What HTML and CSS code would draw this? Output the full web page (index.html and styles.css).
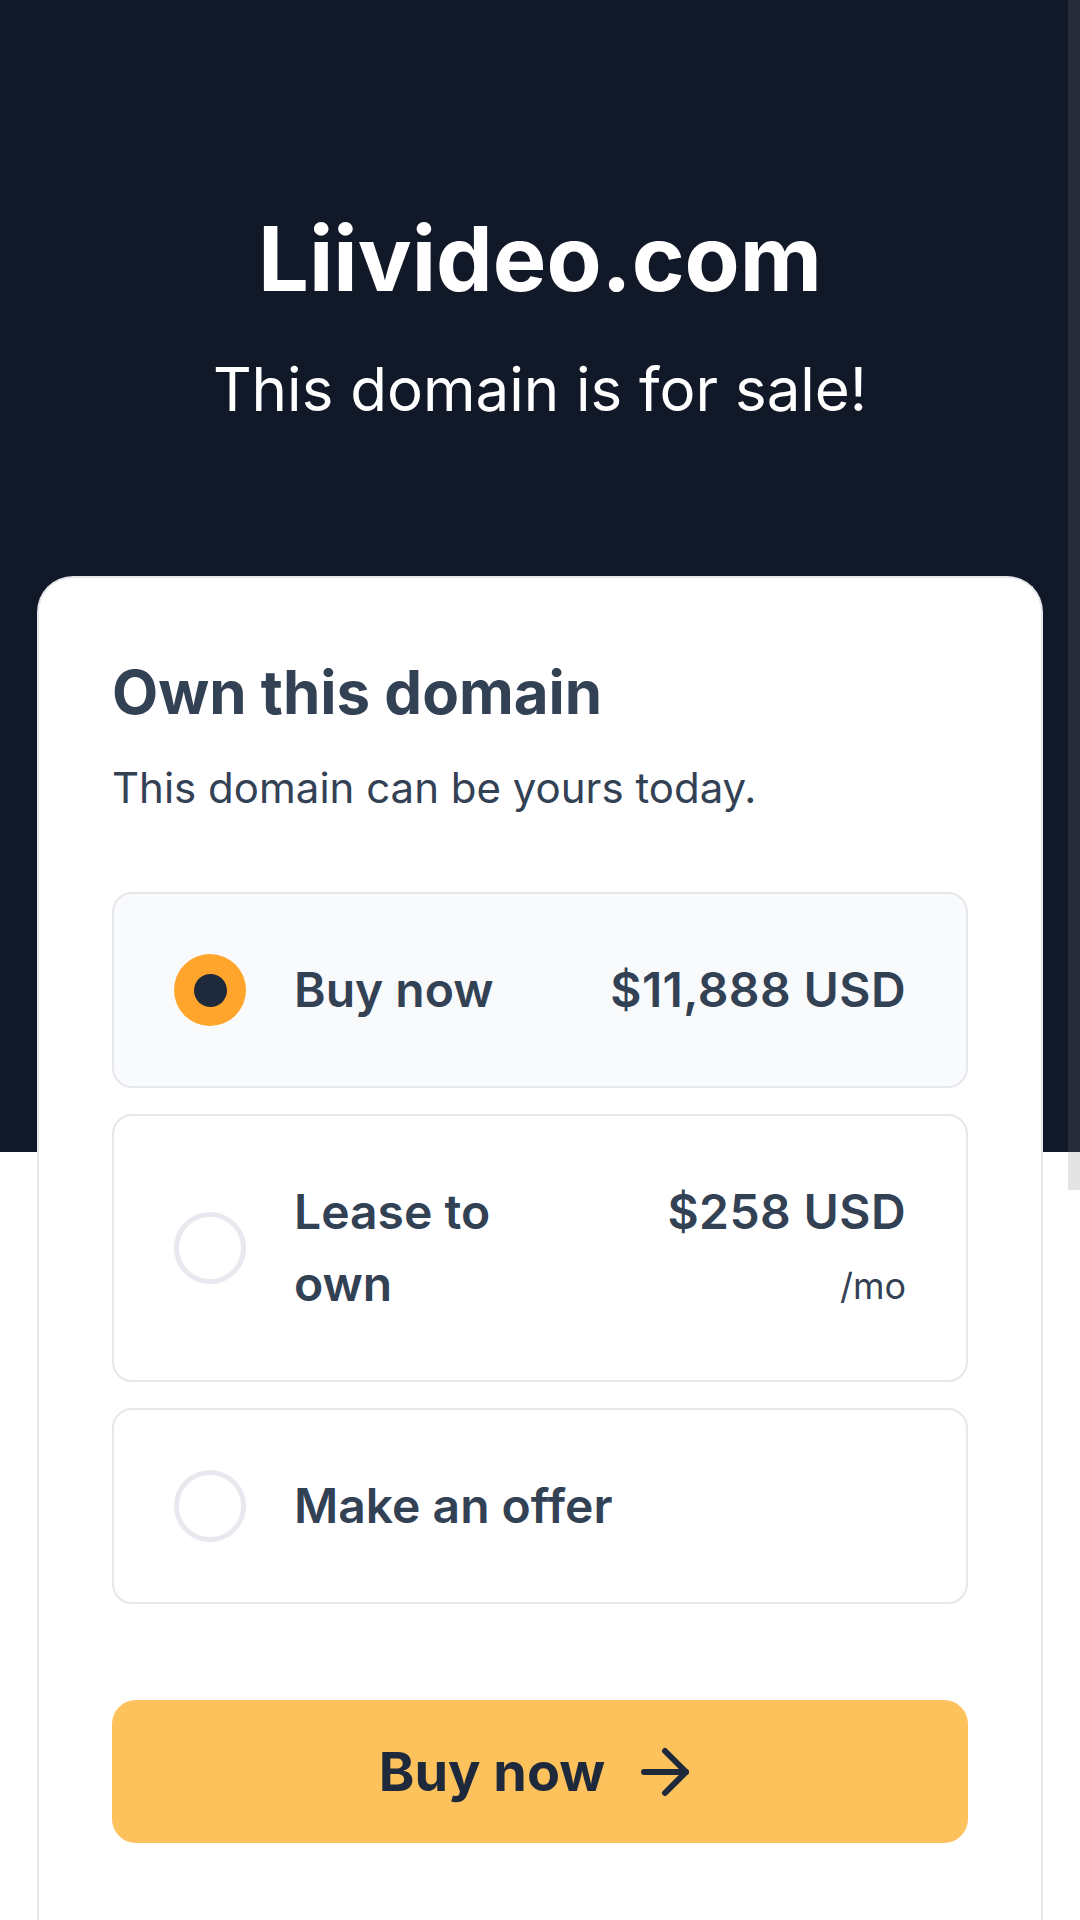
FILE: index.html
```html
<!DOCTYPE html>
<html lang="en">
<head>
<meta charset="utf-8">
<title>Liivideo.com</title>
<link rel="stylesheet" href="styles.css">
</head>
<body>
<div class="scrollbar"><div class="scrollbar-thumb"></div></div>
<header class="hero">
  <h1 class="hero-title">Liivideo.com</h1>
  <p class="hero-sub">This domain is for sale!</p>
</header>
<main class="card">
  <h2 class="card-title">Own this domain</h2>
  <p class="card-sub">This domain can be yours today.</p>
  <div class="options">
    <div class="opt opt-selected">
      <span class="radio radio-on"><span class="radio-dot"></span></span>
      <div class="opt-body">
        <div class="opt-label">Buy now</div>
        <div class="opt-price">$11,888 USD</div>
      </div>
    </div>
    <div class="opt">
      <span class="radio"></span>
      <div class="opt-body">
        <div class="opt-label">Lease to own</div>
        <div class="opt-price">$258 USD<span class="opt-unit">/mo</span></div>
      </div>
    </div>
    <div class="opt">
      <span class="radio"></span>
      <div class="opt-body">
        <div class="opt-label">Make an offer</div>
      </div>
    </div>
  </div>
  <button class="buy-btn" type="button">
    <span>Buy now</span>
    <svg class="buy-arrow" viewBox="0 0 24 24" fill="none" stroke="currentColor" stroke-width="2" stroke-linecap="round" stroke-linejoin="round"><path d="M5 12h14"/><path d="m12 5 7 7-7 7"/></svg>
  </button>
</main>
</body>
</html>
```
FILE: styles.css
```css
html, body {
  margin: 0;
  padding: 0;
}
body {
  font-family: Inter, "Noto Sans", "Liberation Sans", sans-serif;
  background: linear-gradient(#111827 0, #111827 1152px, #ffffff 1152px);
  min-height: 1920px;
  color: #334155;
}
.scrollbar {
  position: fixed;
  top: 0;
  right: 0;
  width: 12px;
  height: 1152px;
  background: #272c39;
}
.scrollbar-thumb {
  position: absolute;
  left: 0;
  top: 1152px;
  width: 12px;
  height: 38px;
  background: #e4e4e4;
}
.hero {
  padding-top: 205px;
  height: 371px;
  text-align: center;
  color: #ffffff;
}
.hero-title {
  margin: 0;
  font-size: 90px;
  line-height: 108px;
  font-weight: 700;
}
.hero-sub {
  margin: 40px 0 0;
  font-size: 60px;
  line-height: 72px;
  font-weight: 400;
}
.card {
  margin: 0 37px;
  border: 2px solid #e5e7eb;
  border-bottom: none;
  border-radius: 36px 36px 0 0;
  background: #ffffff;
  padding: 72px 73px 80px;
  min-height: 1300px;
  box-sizing: border-box;
}
.card-title {
  margin: 0;
  font-size: 60px;
  line-height: 84px;
  font-weight: 700;
}
.card-sub {
  margin: 24px 0 0;
  font-size: 42px;
  line-height: 60px;
  font-weight: 400;
}
.options {
  margin-top: 74px;
  display: flex;
  flex-direction: column;
  gap: 26px;
}
.opt {
  display: flex;
  align-items: center;
  gap: 48px;
  padding: 60px;
  border: 2px solid #e5e7eb;
  border-radius: 20px;
  background: #ffffff;
}
.opt-selected {
  background: #f9fafb;
}
.radio {
  flex: 0 0 auto;
  width: 72px;
  height: 72px;
  box-sizing: border-box;
  border: 5px solid #e8e9ee;
  border-radius: 50%;
  display: flex;
  align-items: center;
  justify-content: center;
}
.radio-on {
  border: none;
  background: #ffa52b;
}
.radio-dot {
  width: 33px;
  height: 33px;
  border-radius: 50%;
  background: #1e293b;
}
.opt-body {
  flex: 1;
  display: flex;
  align-items: flex-start;
  gap: 90px;
  font-size: 48px;
  line-height: 72px;
  font-weight: 600;
}
.opt-label {
  flex: 1;
  min-width: 0;
}
.opt-price {
  flex: 0 0 auto;
  white-space: nowrap;
  text-align: right;
  letter-spacing: 0.4px;
}
.opt-unit {
  display: block;
  padding-top: 4px;
  font-size: 36px;
  line-height: 68px;
  font-weight: 400;
  letter-spacing: 0;
}
.buy-btn {
  margin-top: 96px;
  width: 100%;
  height: 143px;
  border: none;
  border-radius: 24px;
  background: #fec25d;
  color: #1e293b;
  font-family: inherit;
  font-size: 54px;
  font-weight: 700;
  display: flex;
  align-items: center;
  justify-content: center;
  gap: 24px;
  padding: 0;
}
.buy-arrow {
  width: 72px;
  height: 72px;
}
```
